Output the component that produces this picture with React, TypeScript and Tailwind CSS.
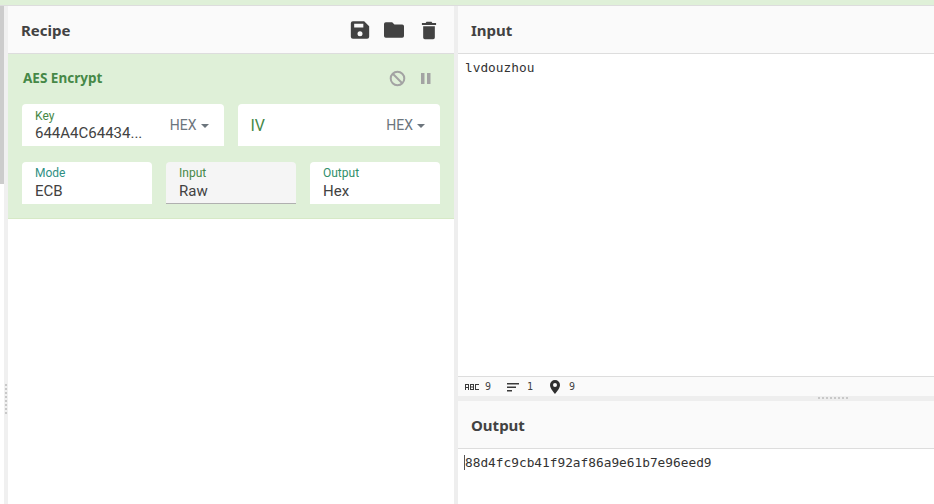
import React from "react";

const Caret = () => (
  <span className="ml-[4px] inline-block h-0 w-0 translate-y-[-2px] border-x-[4px] border-t-[4px] border-x-transparent border-t-[#6c757d]" />
);

function Field({ label, value, muted, labelClass }: { label: string; value: string; muted?: boolean; labelClass: string }) {
  return (
    <div className={`h-[42px] flex-1 rounded-t-[4px] pl-[13px] pr-[12px] pt-[4px] ${muted ? "border-b border-[#b0b0b0] bg-[#f5f5f5]" : "bg-white"}`}>
      <div className={`text-[12px] leading-[14px] ${labelClass}`}>{label}</div>
      <div className="mt-[1px] text-[15px] leading-[20px] text-[#424242]">{value}</div>
    </div>
  );
}

function PanelHeader({ title, children }: { title: string; children?: React.ReactNode }) {
  return (
    <div className="flex h-[48px] shrink-0 items-center justify-between border-b border-[#dddddd] bg-[#fafafa] pl-[13px] pr-[15px]">
      <span className="pt-[2px] text-[15px] font-bold text-[#424242]" style={{ fontFamily: '"Noto Sans", sans-serif' }}>{title}</span>
      {children}
    </div>
  );
}

export default function App() {
  return (
    <div className="flex h-[504px] w-[934px] flex-col overflow-hidden bg-white" style={{ fontFamily: 'Roboto, sans-serif' }}>
      <div className="h-[6px] shrink-0 border-b border-[#dddddd] bg-[#dff0d8]" />
      <div className="flex min-h-0 flex-1">
        <div className="flex w-[8px] shrink-0">
          <div className="h-[178px] w-[4px] bg-[#cccccc]" />
          <div className="relative h-full w-[4px] bg-[#f0f0f0]">
            <div className="absolute left-[1px] top-[378px] h-[30px] w-[2px] bg-[repeating-linear-gradient(to_bottom,#c8c8c8_0,#c8c8c8_2px,transparent_2px,transparent_4px)]" />
          </div>
        </div>
        <div className="flex w-[446px] shrink-0 flex-col">
          <PanelHeader title="Recipe">
            <div className="flex items-center text-[#424242]">
              <svg width="20" height="20" viewBox="0 0 24 24" fill="currentColor"><path d="M17 1.500H3.500a2.500 2.500 0 0 0-2.500 2.500v16a2.500 2.500 0 0 0 2.500 2.500h17a2.500 2.500 0 0 0 2.500-2.500V7.500L17 1.500zm-5 18a3 3 0 1 1 0-6 3 3 0 0 1 0 6zM16 9H5V4.500h11V9z" /></svg>
              <svg width="22" height="20" viewBox="0 0 24 22" fill="currentColor" className="ml-[13px]"><path d="M10 2.500H3a2 2 0 0 0-2 2v13a2 2 0 0 0 2 2h18a2 2 0 0 0 2-2V7a2 2 0 0 0-2-2h-8.500L10 2.500z" /></svg>
              <svg width="20" height="20" viewBox="0 0 24 24" fill="currentColor" className="ml-[14px]"><path d="M5 7.500h14V21a2 2 0 0 1-2 2H7a2 2 0 0 1-2-2V7.500zM20.500 3.500H16L15 2H9L8 3.500H3.500V6h17V3.500z" /></svg>
            </div>
          </PanelHeader>
          <div className="flex h-[165px] shrink-0 flex-col border-b border-[#d6e9c6] bg-[#dff0d8] px-[14px]">
            <div className="flex h-[50px] shrink-0 items-center justify-between pb-[2px] pl-[1px] pr-[9px]">
              <span className="text-[13.500px] font-bold text-[#468847]" style={{ fontFamily: '"Noto Sans", sans-serif' }}>AES Encrypt</span>
              <div className="flex items-center gap-[15px] text-[#a3a3a3]">
                <svg width="17" height="17" viewBox="0 0 17 17" fill="none" stroke="currentColor" strokeWidth="2"><circle cx="8.500" cy="8.500" r="6.800" /><path d="M3.800 3.800l9.400 9.400" /></svg>
                <svg width="10" height="11" viewBox="0 0 10 11" fill="currentColor"><rect x="0" y="0" width="3.500" height="11" /><rect x="6" y="0" width="3.500" height="11" /></svg>
              </div>
            </div>
            <div className="flex gap-[14px]">
              <div className="flex h-[42px] w-[202px] items-center justify-between rounded-t-[4px] bg-white pl-[13px] pr-[15px]">
                <div className="pt-[1px]">
                  <div className="text-[12px] leading-[14px] text-[#468847]">Key</div>
                  <div className="w-[107px] overflow-hidden text-[15px] leading-[20px] text-[#424242]">644A4C64434...</div>
                </div>
                <div className="pt-[1px] text-[14px] text-[#6c757d]">HEX<Caret /></div>
              </div>
              <div className="flex h-[42px] w-[203px] items-center justify-between rounded-t-[4px] bg-white pl-[13px] pr-[15px]">
                <span className="pt-[1px] text-[16px] text-[#468847]">IV</span>
                <div className="pt-[1px] text-[14px] text-[#6c757d]">HEX<Caret /></div>
              </div>
            </div>
            <div className="mt-[16px] flex w-[418px] gap-[14px]">
              <Field label="Mode" value="ECB" labelClass="text-[#2f8f83]" />
              <Field label="Input" value="Raw" muted labelClass="text-[#468847]" />
              <Field label="Output" value="Hex" labelClass="text-[#2f8f6a]" />
            </div>
          </div>
          <div className="flex-1 bg-white" />
        </div>
        <div className="w-[4px] shrink-0 bg-[#eeeeee]" />
        <div className="flex min-w-0 flex-1 flex-col">
          <PanelHeader title="Input" />
          <div className="h-[322px] shrink-0 bg-white pl-[7px] pt-[6px] text-[12.800px] leading-[15px] text-[#333333]" style={{ fontFamily: '"DejaVu Sans Mono", monospace' }}>lvdouzhou</div>
          <div className="flex h-[20px] shrink-0 items-center border-t border-[#dddddd] bg-[#fafafa] pl-[7px] text-[10px] text-[#424242]" style={{ fontFamily: '"DejaVu Sans Mono", monospace' }}>
            <svg width="14" height="6" viewBox="0 0 14 6" fill="#3a3a3a"><path d="M0 0h4v6H3V4H1v2H0zM1 1v2h2V1zM5 0h4v6H5zM6 1v1.500h2V1zM6 3.500V5h2V3.500zM10 0h4v1h-3v4h3v1h-4z" /></svg>
            <span className="ml-[6px]">9</span>
            <svg width="12" height="10" viewBox="0 0 12 10" fill="#3a3a3a" className="ml-[16px]"><rect width="12" height="1.500" y="1" /><rect width="9" height="1.500" y="4.500" /><rect width="5" height="1.500" y="8" /></svg>
            <span className="ml-[8px]">1</span>
            <svg width="10" height="14" viewBox="0 0 10 14" fill="#2f2f2f" className="ml-[17px]"><path d="M5 0a5 5 0 0 0-5 5c0 3.500 5 9 5 9s5-5.500 5-9a5 5 0 0 0-5-5zm0 7a2 2 0 1 1 0-4 2 2 0 0 1 0 4z" /></svg>
            <span className="ml-[9px]">9</span>
          </div>
          <div className="relative h-[5px] shrink-0 bg-[#eeeeee]">
            <div className="absolute left-[360px] top-[1px] h-[2px] w-[30px] bg-[repeating-linear-gradient(to_right,#c8c8c8_0,#c8c8c8_2px,transparent_2px,transparent_4px)]" />
          </div>
          <PanelHeader title="Output" />
          <div className="flex-1 bg-white pl-[6px] pt-[6px] text-[12.800px] leading-[15px] text-[#333333]" style={{ fontFamily: '"DejaVu Sans Mono", monospace' }}>
            <span className="border-l border-[#555555]">88d4fc9cb41f92af86a9e61b7e96eed9</span>
          </div>
        </div>
      </div>
    </div>
  );
}
